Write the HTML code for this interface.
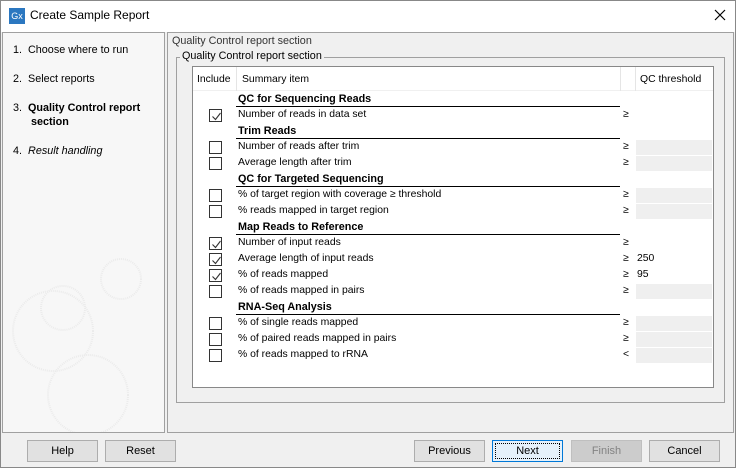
<!DOCTYPE html>
<html><head><meta charset="utf-8"><style>
*{box-sizing:border-box;margin:0;padding:0}
body{width:736px;height:468px;background:#f0f0f0;font-family:"Liberation Sans",Arial,sans-serif;font-size:10.4px;color:#000;position:relative;overflow:hidden}
.a{position:absolute;white-space:nowrap}
.btn{position:absolute;top:440px;width:71px;height:22px;border:1px solid #adadad;background:#e1e1e1;text-align:center;line-height:20px;font-size:11px}
.cb{position:absolute;left:209px;width:13px;height:13px;border:1px solid #333;background:#fff}
.cb svg{position:absolute;left:1px;top:1px}
.fld{position:absolute;left:636px;width:76px;height:15px;background:#efefef}
.h{font-weight:bold;font-size:10.8px}
.ul{position:absolute;left:236px;width:384px;height:1px;background:#000}
.l{font-size:10.8px}
</style></head><body>
<div class="a" style="left:0;top:0;width:736px;height:32px;background:#fff"></div>
<div class="a" style="left:9px;top:8px;width:16px;height:16px;background:#2b77c0;color:#fff;font-size:9px;line-height:16px;text-align:center">Gx</div>
<div class="a" style="left:30px;top:8px;font-size:12px">Create Sample Report</div>
<svg class="a" style="left:713px;top:8px" width="14" height="14"><path d="M2 2L12 12M12 2L2 12" stroke="#000" stroke-width="1.2"/></svg>
<div class="a" style="left:0;top:0;width:736px;height:468px;border:1px solid #888"></div>

<div class="a" style="left:2px;top:32px;width:163px;height:401px;border:1px solid #a0a0a0;background:#f7f7f7;overflow:hidden">
<svg width="163" height="401" style="position:absolute;left:0;top:0">
<g fill="none" stroke="#ebebeb" stroke-width="2" stroke-dasharray="1 1">
<circle cx="50" cy="298" r="40"/><circle cx="85" cy="362" r="40"/><circle cx="118" cy="246" r="20"/><circle cx="60" cy="275" r="22"/></g>
</svg>
</div>
<div class="a l" style="left:13px;top:44px">1.&nbsp; Choose where to run</div>
<div class="a l" style="left:13px;top:73px">2.&nbsp; Select reports</div>
<div class="a l" style="left:13px;top:102px">3.&nbsp; <b>Quality Control report</b></div>
<div class="a l" style="left:31px;top:116px"><b>section</b></div>
<div class="a l" style="left:13px;top:145px">4.&nbsp; <i>Result handling</i></div>

<div class="a" style="left:167px;top:32px;width:567px;height:401px;border:1px solid #a0a0a0"></div>
<div class="a l" style="left:172px;top:35px;color:#333">Quality Control report section</div>
<div class="a" style="left:176px;top:57px;width:549px;height:346px;border:1px solid #a0a0a0"></div>
<div class="a l" style="left:180px;top:50px;background:#f0f0f0;padding:0 2px">Quality Control report section</div>
<div class="a" style="left:192px;top:66px;width:522px;height:322px;border:1px solid #888;background:#fff"></div>
<div class="a" style="left:193px;top:67px;width:520px;height:24px;border-bottom:1px solid #f0f0f0"></div>
<div class="a" style="left:236px;top:67px;width:1px;height:24px;background:#e5e5e5"></div>
<div class="a" style="left:620px;top:67px;width:1px;height:24px;background:#e5e5e5"></div>
<div class="a" style="left:635px;top:67px;width:1px;height:24px;background:#e5e5e5"></div>
<div class="a" style="left:197px;top:74px">Include</div>
<div class="a" style="left:242px;top:74px">Summary item</div>
<div class="a" style="left:640px;top:74px">QC threshold</div>

<div class="a h" style="left:238px;top:93px">QC for Sequencing Reads</div><div class="ul" style="top:106px"></div>
<div class="a" style="left:238px;top:109px">Number of reads in data set</div><div class="a" style="left:623px;top:109px">≥</div>
<div class="a h" style="left:238px;top:125px">Trim Reads</div><div class="ul" style="top:138px"></div>
<div class="a" style="left:238px;top:141px">Number of reads after trim</div><div class="a" style="left:623px;top:141px">≥</div><div class="fld" style="top:140px"></div>
<div class="a" style="left:238px;top:157px">Average length after trim</div><div class="a" style="left:623px;top:157px">≥</div><div class="fld" style="top:156px"></div>
<div class="a h" style="left:238px;top:173px">QC for Targeted Sequencing</div><div class="ul" style="top:186px"></div>
<div class="a" style="left:238px;top:189px">% of target region with coverage ≥ threshold</div><div class="a" style="left:623px;top:189px">≥</div><div class="fld" style="top:188px"></div>
<div class="a" style="left:238px;top:205px">% reads mapped in target region</div><div class="a" style="left:623px;top:205px">≥</div><div class="fld" style="top:204px"></div>
<div class="a h" style="left:238px;top:221px">Map Reads to Reference</div><div class="ul" style="top:234px"></div>
<div class="a" style="left:238px;top:237px">Number of input reads</div><div class="a" style="left:623px;top:237px">≥</div>
<div class="a" style="left:238px;top:253px">Average length of input reads</div><div class="a" style="left:623px;top:253px">≥</div><div class="a" style="left:637px;top:253px">250</div>
<div class="a" style="left:238px;top:269px">% of reads mapped</div><div class="a" style="left:623px;top:269px">≥</div><div class="a" style="left:637px;top:269px">95</div>
<div class="a" style="left:238px;top:285px">% of reads mapped in pairs</div><div class="a" style="left:623px;top:285px">≥</div><div class="fld" style="top:284px"></div>
<div class="a h" style="left:238px;top:301px">RNA-Seq Analysis</div><div class="ul" style="top:314px"></div>
<div class="a" style="left:238px;top:317px">% of single reads mapped</div><div class="a" style="left:623px;top:317px">≥</div><div class="fld" style="top:316px"></div>
<div class="a" style="left:238px;top:333px">% of paired reads mapped in pairs</div><div class="a" style="left:623px;top:333px">≥</div><div class="fld" style="top:332px"></div>
<div class="a" style="left:238px;top:349px">% of reads mapped to rRNA</div><div class="a" style="left:623px;top:349px">&lt;</div><div class="fld" style="top:348px"></div>

<div class="cb" style="top:109px"><svg width="11" height="11"><path d="M1.5 5.5L4.5 8.5L9.5 2" stroke="#333" fill="none" stroke-width="1.1"/></svg></div>
<div class="cb" style="top:141px"></div>
<div class="cb" style="top:157px"></div>
<div class="cb" style="top:189px"></div>
<div class="cb" style="top:205px"></div>
<div class="cb" style="top:237px"><svg width="11" height="11"><path d="M1.5 5.5L4.5 8.5L9.5 2" stroke="#333" fill="none" stroke-width="1.1"/></svg></div>
<div class="cb" style="top:253px"><svg width="11" height="11"><path d="M1.5 5.5L4.5 8.5L9.5 2" stroke="#333" fill="none" stroke-width="1.1"/></svg></div>
<div class="cb" style="top:269px"><svg width="11" height="11"><path d="M1.5 5.5L4.5 8.5L9.5 2" stroke="#333" fill="none" stroke-width="1.1"/></svg></div>
<div class="cb" style="top:285px"></div>
<div class="cb" style="top:317px"></div>
<div class="cb" style="top:333px"></div>
<div class="cb" style="top:349px"></div>

<div class="btn" style="left:27px">Help</div>
<div class="btn" style="left:105px">Reset</div>
<div class="btn" style="left:414px">Previous</div>
<div class="btn" style="left:492px;border-color:#0078d7;background:#e5f1fb"><div style="position:absolute;left:2px;top:2px;right:2px;bottom:2px;border:1px dotted #000"></div>Next</div>
<div class="btn" style="left:571px;background:#ccc;border-color:#bfbfbf;color:#838383">Finish</div>
<div class="btn" style="left:649px">Cancel</div>
</body></html>
